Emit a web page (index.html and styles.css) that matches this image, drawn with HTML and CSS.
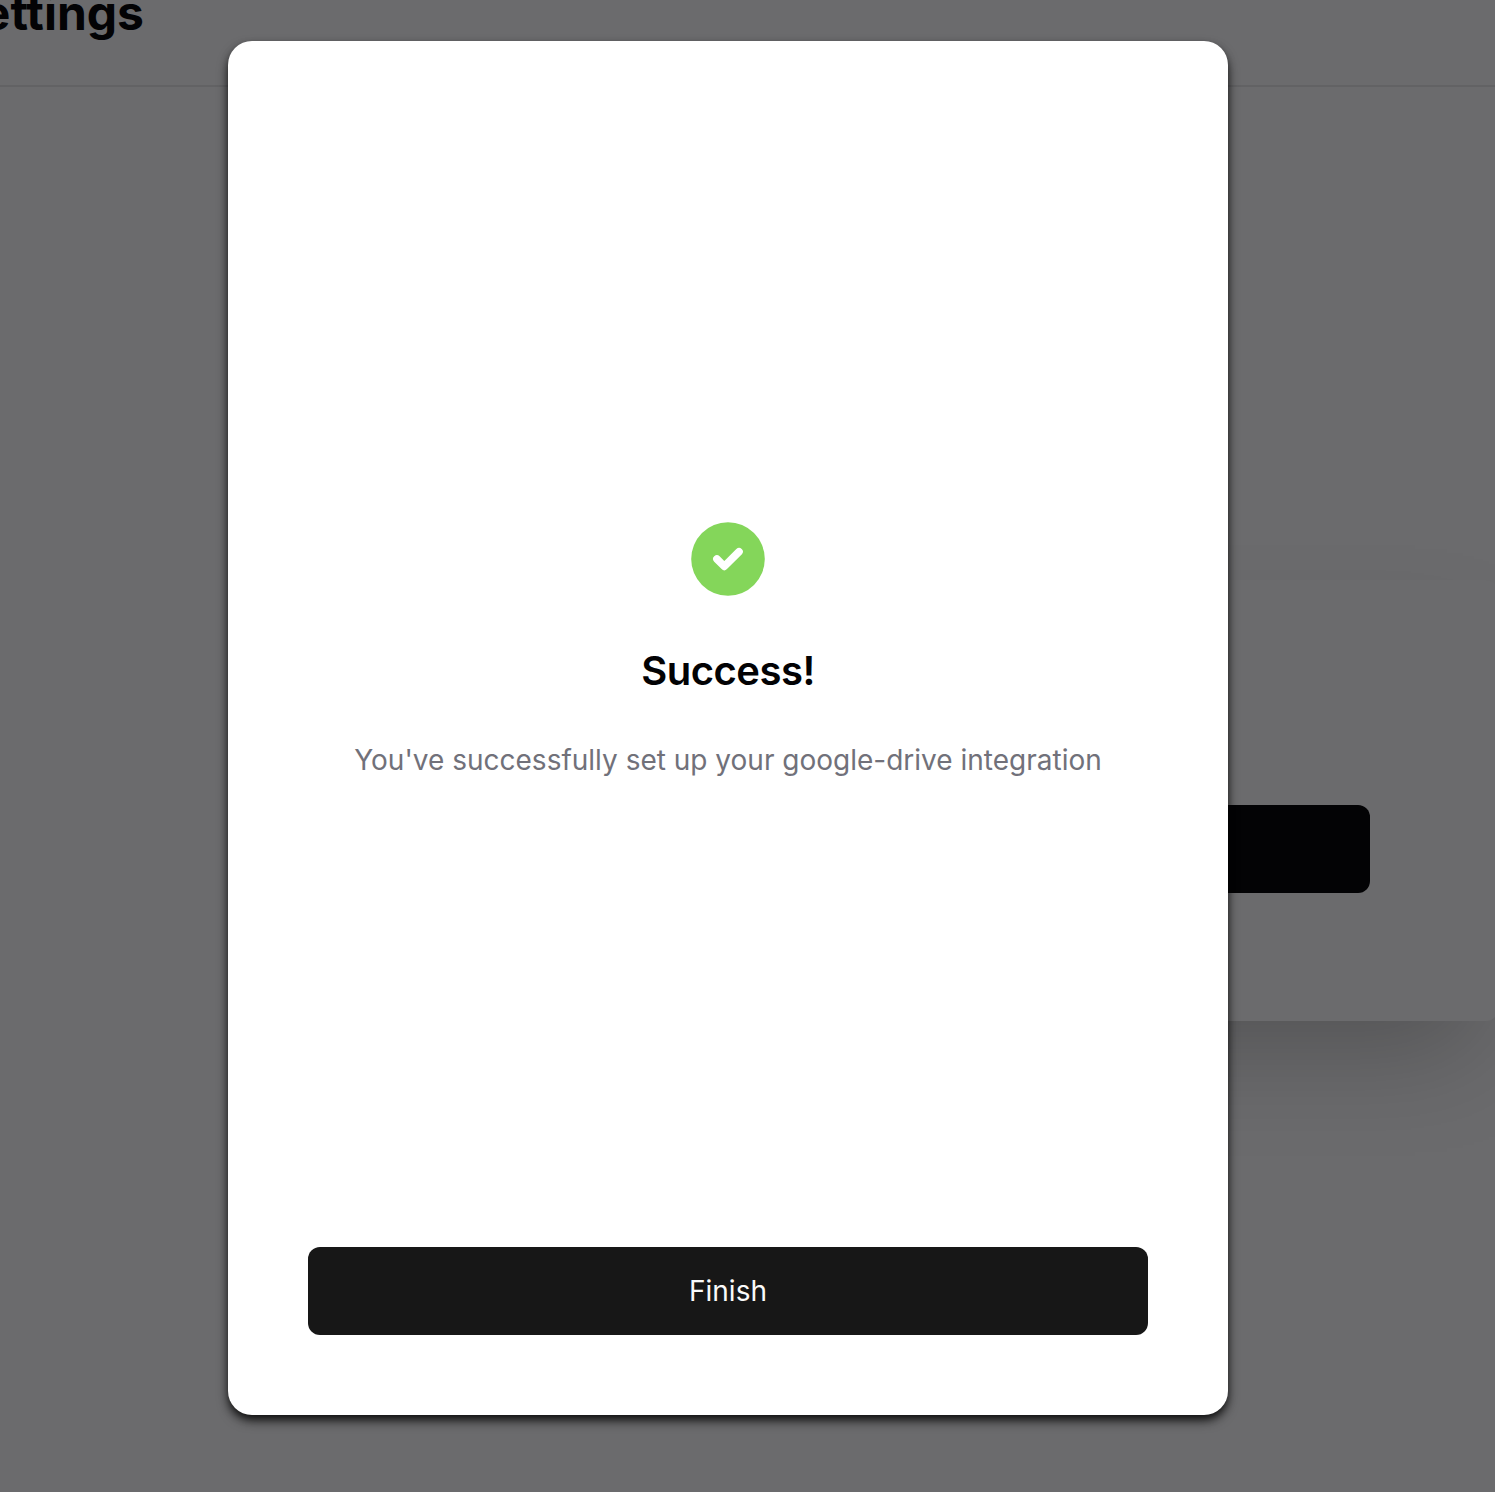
FILE: index.html
```html
<!DOCTYPE html>
<html lang="en">
<head>
<meta charset="utf-8">
<title>Settings</title>
<link rel="stylesheet" href="styles.css">
</head>
<body>
<div class="page">
  <header class="header"><h1 class="heading">Settings</h1></header>
  <main class="content">
    <section class="card"><div class="card-button"></div></section>
  </main>
</div>
<div class="overlay">
  <div class="modal" role="dialog" aria-labelledby="title">
    <div class="message">
      <svg class="icon" viewBox="0 0 74 74" aria-hidden="true">
        <circle cx="37" cy="37" r="36.8" fill="#84d65a"/>
        <path d="M25.9 37 33.3 44.4 48 29.8" fill="none" stroke="#fff" stroke-width="7.6" stroke-linecap="round" stroke-linejoin="round"/>
      </svg>
      <h2 class="title" id="title">Success!</h2>
      <p class="text">You've successfully set up your google-drive integration</p>
    </div>
    <button class="finish" type="button">Finish</button>
  </div>
</div>
</body>
</html>
```
FILE: styles.css
```css
* { box-sizing: border-box; margin: 0; }
body {
  height: 1492px;
  overflow: hidden;
  background: #6b6b6d;
  font-family: Inter, "Liberation Sans", sans-serif;
}
.page { display: flex; flex-direction: column; height: 1492px; }
.header {
  display: flex;
  align-items: flex-start;
  height: 87px;
  border-bottom: 2px solid #626264;
}
.heading {
  width: 144px;
  display: flex;
  justify-content: flex-end;
  margin-top: -17px;
  font-size: 48px;
  line-height: 60px;
  font-weight: 700;
  color: #030305;
}
.content { flex: 1; padding: 493px 0 0 398px; }
.card {
  display: flex;
  justify-content: flex-end;
  align-items: flex-end;
  width: 1100px;
  height: 441px;
  padding: 0 128px 128px;
  border-radius: 12px;
  background: #6b6b6d;
  box-shadow: 0 50px 100px -24px rgba(0, 0, 0, .23);
}
.card-button { width: 600px; height: 88px; border-radius: 12px; background: #030305; }
.overlay {
  position: absolute;
  inset: 0;
  display: flex;
  align-items: flex-start;
  padding: 41px 0 0 228px;
}
.modal {
  display: flex;
  flex-direction: column;
  width: 1000px;
  height: 1374px;
  padding: 80px;
  border-radius: 24px;
  background: #fff;
  box-shadow: 0 6px 12px -1px rgba(0, 0, 0, .75), 0 4px 8px -2px rgba(0, 0, 0, .6);
}
.message {
  flex: 1;
  display: flex;
  flex-direction: column;
  align-items: center;
  padding-top: 401px;
}
.icon { width: 74px; height: 74px; }
.title {
  margin-top: 47px;
  font-size: 40px;
  line-height: 56px;
  font-weight: 600;
  letter-spacing: -.5px;
  color: #020204;
}
.text {
  margin-top: 41px;
  font-size: 28px;
  line-height: 40px;
  white-space: nowrap;
  color: #71717a;
}
.finish {
  height: 88px;
  border: 0;
  border-radius: 12px;
  background: #171717;
  color: #fafafa;
  font: 400 28px/40px Inter, "Liberation Sans", sans-serif;
}
```
